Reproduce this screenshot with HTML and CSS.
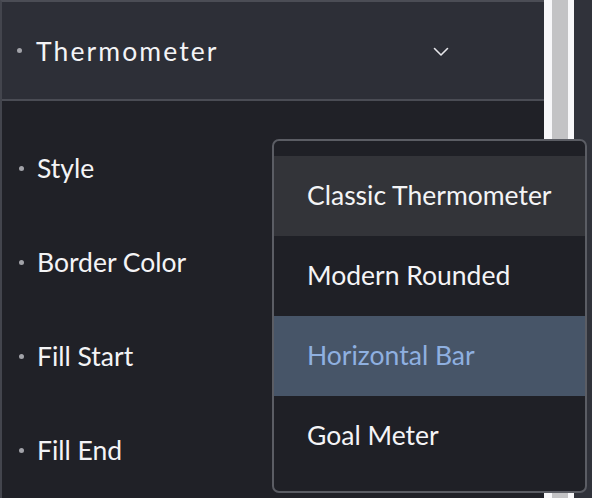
FILE: index.html
```html
<!DOCTYPE html>
<html>
<head>
<meta charset="utf-8">
<link rel="stylesheet" href="styles.css">
</head>
<body>
<div class="app">
  <div class="panel">
    <div class="header">
      <span class="dot"></span>
      <span class="title">Thermometer</span>
      <svg class="chev" width="16" height="10" viewBox="0 0 16 10"><path d="M1.5 1.5 L8 8 L14.5 1.5" fill="none" stroke="#e6e6ea" stroke-width="1.6" stroke-linecap="round" stroke-linejoin="round"/></svg>
    </div>
    <div class="rows">
      <div class="row"><span class="dot"></span><span class="label">Style</span></div>
      <div class="row"><span class="dot"></span><span class="label">Border Color</span></div>
      <div class="row"><span class="dot"></span><span class="label">Fill Start</span></div>
      <div class="row"><span class="dot"></span><span class="label">Fill End</span></div>
    </div>
  </div>
  <div class="scroll"><div class="thumb"></div></div>
  <div class="side"></div>
  <div class="menu">
    <div class="opt hover">Classic Thermometer</div>
    <div class="opt">Modern Rounded</div>
    <div class="opt selected">Horizontal Bar</div>
    <div class="opt">Goal Meter</div>
  </div>
</div>
</body>
</html>
```
FILE: styles.css
```css
html, body {
  margin: 0;
  padding: 0;
  width: 592px;
  height: 498px;
  overflow: hidden;
  background: #202127;
  font-family: "Lato", "Noto Sans", sans-serif;
}
.app {
  position: relative;
  display: flex;
  width: 592px;
  height: 498px;
}
.panel {
  width: 542px;
  border-left: 2px solid #43454d;
  border-top: 2px solid #4b4d55;
  background: #202127;
  display: flex;
  flex-direction: column;
}
.header {
  height: 97px;
  background: #2d2f37;
  border-bottom: 2px solid #4a4c54;
  display: flex;
  align-items: center;
  padding-left: 15px;
  padding-right: 95px;
}
.dot {
  width: 5px;
  height: 5px;
  border-radius: 50%;
  background: #a2a3a9;
  flex: none;
}
.title {
  margin-left: 14px;
  color: #f4f4f6;
  font-size: 26.5px;
  letter-spacing: 2.1px;
  flex: 1;
}
.chev {
  flex: none;
  margin-top: 3px;
}
.rows {
  display: flex;
  flex-direction: column;
  padding-top: 20px;
}
.row {
  height: 94px;
  display: flex;
  align-items: center;
  padding-left: 17px;
}
.row .label {
  margin-left: 13px;
  color: #f4f4f6;
  font-size: 26.5px;
}
.scroll {
  width: 30px;
  background: #f7f7f9;
  display: flex;
  justify-content: flex-start;
}
.thumb {
  width: 16px;
  margin-left: 8px;
  background: #c3c3c5;
}
.side {
  flex: 1;
  background: #30323a;
}
.menu {
  position: absolute;
  left: 272px;
  top: 139px;
  width: 311px;
  padding: 15px 0 15px;
  background: #1f2026;
  border: 2px solid #5b5d64;
  border-radius: 7px;
}
.opt {
  height: 80px;
  display: flex;
  align-items: center;
  padding-left: 33px;
  padding-bottom: 2px;
  box-sizing: border-box;
  color: #f4f4f6;
  font-size: 26.5px;
}
.opt.hover {
  background: #333439;
}
.opt.selected {
  background: #475568;
  color: #8fb0e0;
}
```
